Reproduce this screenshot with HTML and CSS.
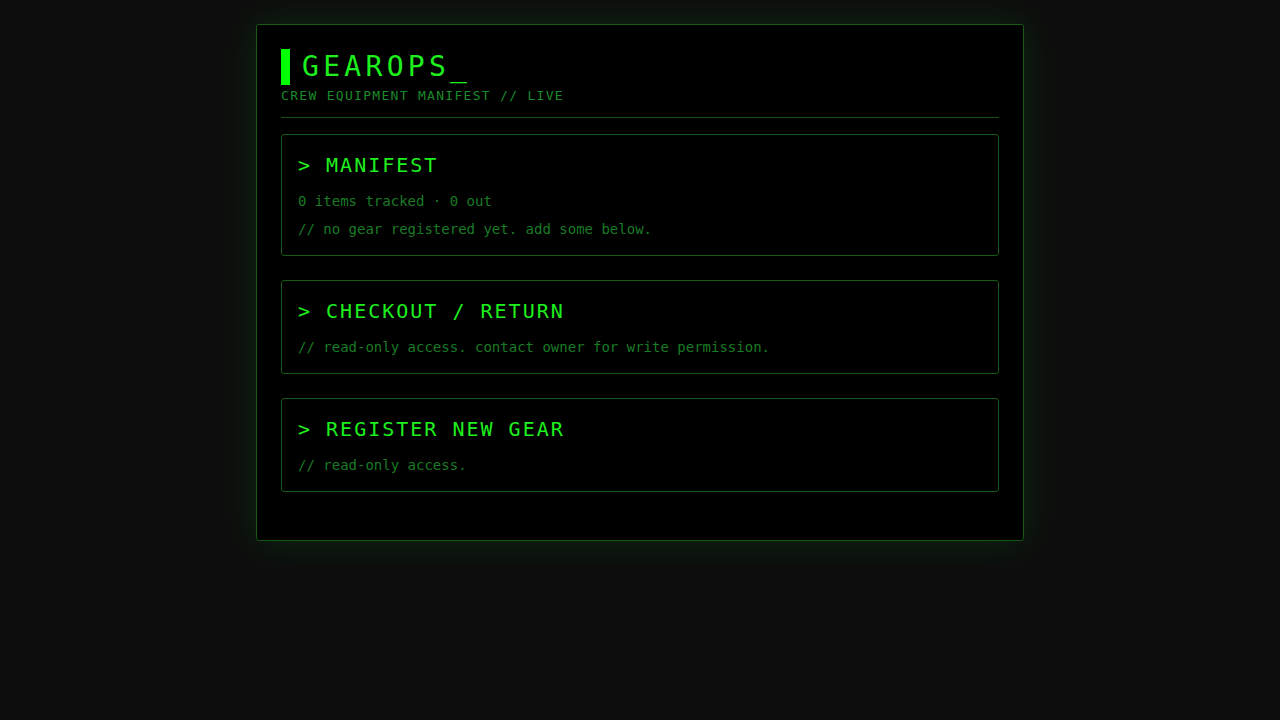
FILE: index.html
```html
<!DOCTYPE html>
<html lang="en">
<head>
<meta charset="utf-8">
<title>GearOps</title>
<link rel="stylesheet" href="styles.css">
</head>
<body>
<main class="terminal">
  <header class="header">
    <h1 class="title">GEAROPS_</h1>
    <p class="subtitle">CREW EQUIPMENT MANIFEST // LIVE</p>
  </header>
  <section class="card">
    <h2 class="card-title">&gt; MANIFEST</h2>
    <p class="line">0 items tracked · 0 out</p>
    <p class="line">// no gear registered yet. add some below.</p>
  </section>
  <section class="card">
    <h2 class="card-title">&gt; CHECKOUT / RETURN</h2>
    <p class="line">// read-only access. contact owner for write permission.</p>
  </section>
  <section class="card">
    <h2 class="card-title">&gt; REGISTER NEW GEAR</h2>
    <p class="line">// read-only access.</p>
  </section>
</main>
</body>
</html>
```

FILE: styles.css
```css
* { box-sizing: border-box; }
html, body { margin: 0; padding: 0; }
body {
  background: #0d0d0d;
  font-family: "DejaVu Sans Mono", "Liberation Mono", monospace;
  color: #1f8a2a;
  padding: 24px 0;
}
.terminal {
  width: 768px;
  margin: 0 auto;
  background: #000;
  border: 1px solid #145a14;
  border-radius: 3px;
  padding: 24px;
  box-shadow: 0 0 40px rgba(0, 255, 40, 0.12);
}
.header {
  border-bottom: 1px solid #145214;
  padding-bottom: 14px;
  margin-bottom: 16px;
}
.title {
  margin: 0;
  font-size: 28px;
  font-weight: normal;
  letter-spacing: 4.3px;
  line-height: 36px;
  color: #1ef01e;
  border-left: 9px solid #00ff00;
  padding-left: 12px;
}
.subtitle {
  margin: 3px 0 0;
  font-size: 13px;
  letter-spacing: 0.1em;
  line-height: normal;
  color: #1a8a2a;
}
.card {
  border: 1px solid #145a14;
  border-radius: 3px;
  padding: 16px;
  margin-bottom: 24px;
}
.card-title {
  margin: 0 0 13px;
  font-size: 20px;
  font-weight: normal;
  letter-spacing: 2px;
  line-height: 28px;
  color: #1ef01e;
}
.line {
  margin: 0 0 9px;
  font-size: 14px;
  line-height: 1.35;
  color: #1a7a25;
}
.line:last-child { margin-bottom: 0; }
```
